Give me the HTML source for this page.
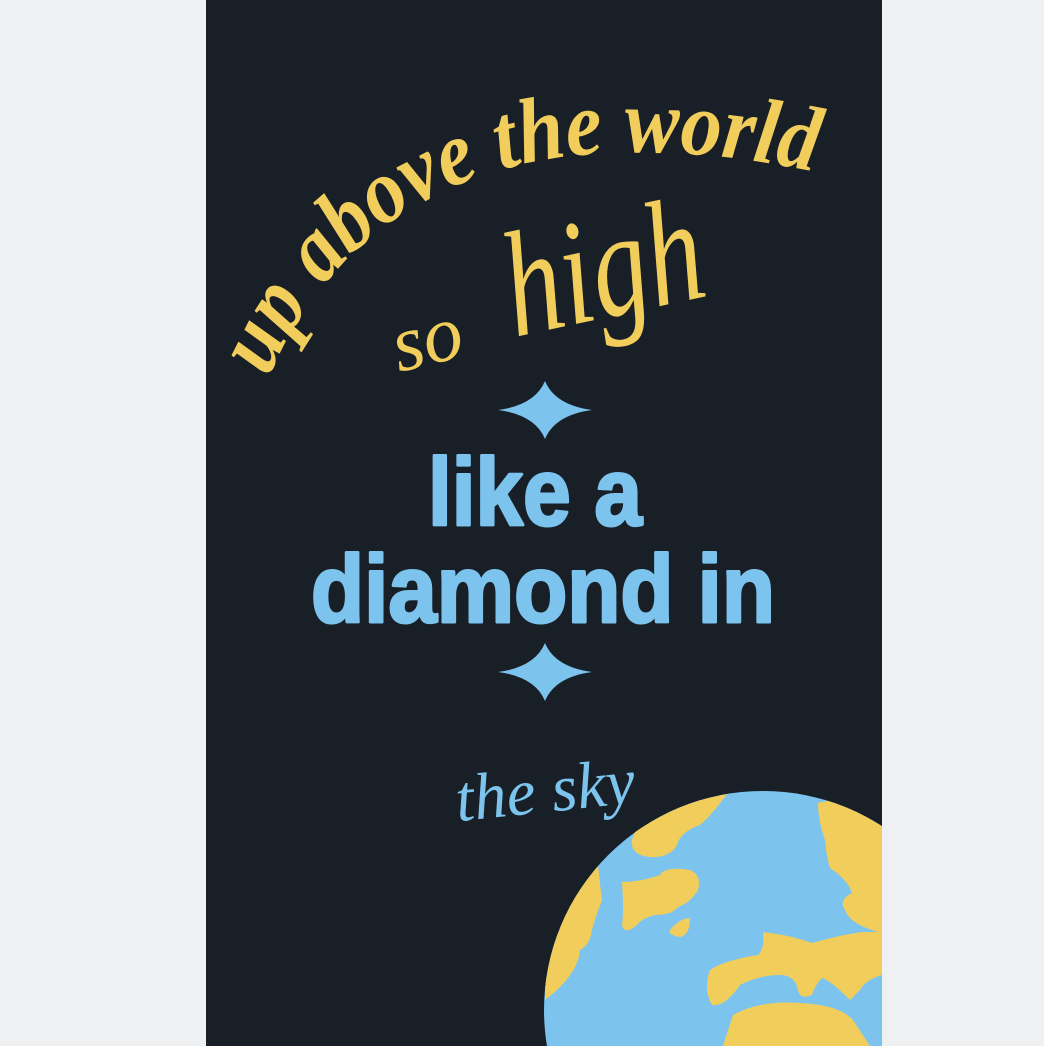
<!DOCTYPE html>
<html><head><meta charset="utf-8"><style>
html,body{margin:0;padding:0;background:#eef0f2;width:1044px;height:1046px;overflow:hidden}
svg{display:block}
</style></head><body>
<svg width="1044" height="1046" viewBox="0 0 1044 1046" xmlns="http://www.w3.org/2000/svg">
<rect x="0" y="0" width="1044" height="1046" fill="#eef0f2"/>
<rect x="206" y="0" width="676" height="1046" fill="#191f26"/>
<defs>
<path id="arc" d="M 268 378 Q 400 80 830 175"/>
<clipPath id="globe"><circle cx="763" cy="1010" r="219"/></clipPath>
<clipPath id="panel"><rect x="206" y="0" width="676" height="1046"/></clipPath>
</defs>
<text font-family="Liberation Serif, serif" font-style="italic" font-weight="bold" font-size="92" fill="#f1cd5c"><textPath href="#arc" textLength="640" lengthAdjust="spacingAndGlyphs">up above the world</textPath></text>
<text x="392" y="365" font-family="Liberation Serif, serif" font-style="italic" font-size="80" fill="#f1cd5c" transform="rotate(-14 425 340)" textLength="70" lengthAdjust="spacingAndGlyphs">so</text>
<text x="505" y="318" font-family="Liberation Serif, serif" font-style="italic" font-size="150" fill="#f1cd5c" transform="rotate(-12 600 280)" textLength="200" lengthAdjust="spacingAndGlyphs">high</text>
<path d="M545 381 Q555 405 592 410 Q555 415 545 439 Q535 415 498 410 Q535 405 545 381Z" fill="#7cc4ee"/>
<path d="M545 643 Q555 667 592 672 Q555 677 545 701 Q535 677 498 672 Q535 667 545 643Z" fill="#7cc4ee"/>
<g font-family="Liberation Sans, sans-serif" font-weight="bold" font-size="96" fill="#7cc4ee" stroke="#7cc4ee" stroke-width="3" stroke-linejoin="round">
<text x="428" y="525" textLength="214" lengthAdjust="spacingAndGlyphs">like a</text>
<text x="311" y="622" textLength="464" lengthAdjust="spacingAndGlyphs">diamond in</text>
</g>
<text x="455" y="812" font-family="Liberation Serif, serif" font-style="italic" font-size="66" fill="#7cc4ee" transform="rotate(-6 545 790)" textLength="180" lengthAdjust="spacingAndGlyphs">the sky</text>
<g clip-path="url(#panel)">
<circle cx="763" cy="1010" r="219" fill="#7cc4ee"/>
<g clip-path="url(#globe)" fill="#f1cd5c">
<path d="M636 793 L730 790 Q712 815 700 825 Q680 832 677 845 Q670 858 650 857 Q630 855 632 840 Q640 820 636 793Z"/>
<path d="M545 867 L598 865 Q600 885 602 900 Q596 915 592 930 Q590 945 580 950 Q578 975 545 1000Z"/>
<path d="M622 882 Q640 882 660 875 Q665 866 690 870 Q702 875 698 890 Q690 903 678 907 Q672 915 655 915 Q642 918 636 926 Q624 935 622 925 Q624 910 622 882Z"/>
<path d="M670 930 Q680 918 690 918 Q690 935 680 937 Q668 935 670 930Z"/>
<path d="M818 803 Q840 796 882 810 L882 933 Q850 925 845 910 Q838 900 852 893 Q848 880 830 868 Q826 855 825 840 Q818 820 818 803Z"/>
<path d="M763 932 Q790 935 812 943 Q840 935 862 932 L882 932 L882 975 Q865 980 860 990 L850 1000 Q830 980 822 978 Q815 985 812 995 Q800 1000 798 990 Q795 975 780 975 Q760 975 740 985 Q725 1007 712 1005 Q703 990 710 970 Q725 960 758 955 Q765 948 763 932Z"/>
<path d="M733 1015 Q760 1000 800 1003 Q840 1005 853 1020 L870 1046 L723 1046Z"/>
</g>
</g>
</svg>
</body></html>
